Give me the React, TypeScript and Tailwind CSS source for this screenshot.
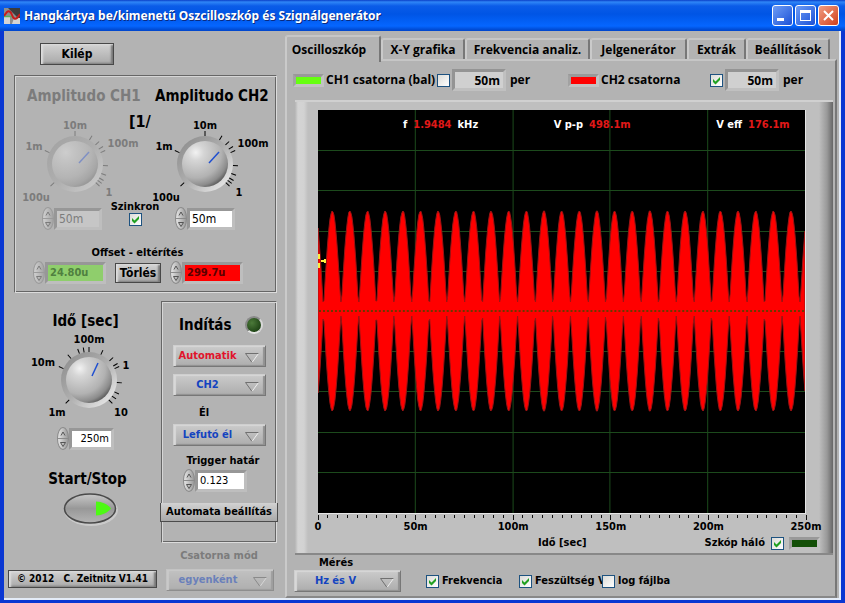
import React, { useState } from 'react';
import clsx from 'clsx';

const TABS = [
  { id: 'scope', label: 'Oscilloszkóp', width: 'w-[96px]' },
  { id: 'xy', label: 'X-Y grafika', width: 'w-[84px]' },
  { id: 'freq', label: 'Frekvencia analiz.', width: 'w-[125px]' },
  { id: 'gen', label: 'Jelgenerátor', width: 'w-[97px]' },
  { id: 'extra', label: 'Extrák', width: 'w-[59px]' },
  { id: 'settings', label: 'Beállítások', width: 'w-[84px]' },
];

interface DialLabel {
  text: string;
  x: number;
  y: number;
}

const AMP_TICKS = [-132, -66, 0, 31, 47, 58, 66, 93, 110, 120, 126, 132];
const AMP_LABELS: DialLabel[] = [
  { text: '10m', x: 0, y: -39 },
  { text: '1m', x: -41, y: -18 },
  { text: '100m', x: 48, y: -21 },
  { text: '100u', x: -39, y: 33 },
  { text: '1', x: 34, y: 28 },
];

const TIME_TICKS = [-135, -66, -40, -20, -10, 0, 25, 47, 60, 66, 95, 115, 125, 135];
const TIME_LABELS: DialLabel[] = [
  { text: '100m', x: 0, y: -41 },
  { text: '10m', x: -46, y: -18 },
  { text: '1', x: 37, y: -15 },
  { text: '1m', x: -32, y: 32 },
  { text: '10', x: 32, y: 32 },
];

interface DialProps {
  id: string;
  className: string;
  cx: number;
  cy: number;
  ticks: number[];
  labels: DialLabel[];
  pointer: [number, number, number, number];
  disabled?: boolean;
}

function Dial({ id, className, cx, cy, ticks, labels, pointer, disabled }: DialProps) {
  const ink = disabled ? '#7c7c7c' : '#000';
  return (
    <svg className={clsx('block shrink-0 overflow-visible', className)} role="img" aria-label={id}>
      <defs>
        <radialGradient id={`${id}-body`} cx="0.3" cy="0.25" r="0.85">
          <stop offset="0" stopColor={disabled ? '#cdcdcd' : '#f2f2f2'} />
          <stop offset="0.2" stopColor={disabled ? '#c4c4c4' : '#d6d6d6'} />
          <stop offset="0.65" stopColor={disabled ? '#b4b4b4' : '#b2b2b2'} />
          <stop offset="0.85" stopColor={disabled ? '#a6a6a6' : '#8c8c8c'} />
          <stop offset="1" stopColor={disabled ? '#929292' : '#4c4c4c'} />
        </radialGradient>
        <linearGradient id={`${id}-ring`} x1="0" y1="0" x2="1" y2="1">
          <stop offset="0.1" stopColor={disabled ? '#a4a4a4' : '#909090'} />
          <stop offset="0.5" stopColor="#aeaeae" />
          <stop offset="0.9" stopColor={disabled ? '#c9c9c9' : '#e8e8e8'} />
        </linearGradient>
      </defs>
      <g transform={`translate(${cx} ${cy})`}>
        <circle r="28" fill={`url(#${id}-ring)`} />
        <circle r="23" fill={`url(#${id}-body)`} />
        <line
          x1={pointer[0]}
          y1={pointer[1]}
          x2={pointer[2]}
          y2={pointer[3]}
          stroke={disabled ? '#7f90c4' : '#1f4fd0'}
          strokeWidth="1.5"
        />
        {ticks.map((a) => (
          <line key={a} y1="-28" y2="-33" stroke={ink} transform={`rotate(${a})`} />
        ))}
        {labels.map((l) => (
          <text key={l.text} x={l.x} y={l.y + 4} textAnchor="middle" fill={ink} className="text-[11px] font-bold">
            {l.text}
          </text>
        ))}
      </g>
    </svg>
  );
}

interface NumberFieldProps {
  label: string;
  value: string;
  className: string;
  inputClass: string;
  disabled?: boolean;
}

function NumberField({ label, value, className, inputClass, disabled }: NumberFieldProps) {
  return (
    <div className={clsx('flex h-[23px] items-center', className)}>
      <div
        className={clsx(
          'flex h-[23px] w-3 shrink-0 flex-col overflow-hidden rounded-[50%] border border-[#8a8a8a] bg-linear-to-r from-[#e6e6e6] to-[#9a9a9a]',
          disabled && 'opacity-60'
        )}
      >
        <button type="button" aria-label={`${label} +`} disabled={disabled} className="flex flex-1 items-center justify-center border-b border-[#8a8a8a]">
          <svg className="h-[5px] w-[6px]" viewBox="0 0 6 5">
            <path d="M1 4.5 3 1l2 3.5" fill="none" stroke="#555" />
          </svg>
        </button>
        <button type="button" aria-label={`${label} -`} disabled={disabled} className="flex flex-1 items-center justify-center">
          <svg className="h-[5px] w-[6px]" viewBox="0 0 6 5">
            <path d="M.5 .5h5L3 4.5z" fill="none" stroke="#555" />
          </svg>
        </button>
      </div>
      <input
        aria-label={label}
        defaultValue={value}
        disabled={disabled}
        className={clsx(
          'h-[22px] min-w-0 flex-1 border-3 border-t-[#979797] border-r-[#bebebe] border-b-[#bebebe] border-l-[#979797] px-[2px] outline-none',
          inputClass
        )}
      />
    </div>
  );
}

interface RingSelectProps {
  label: string;
  value: string;
  className: string;
  textClass: string;
  disabled?: boolean;
}

function RingSelect({ label, value, className, textClass, disabled }: RingSelectProps) {
  return (
    <div className={clsx('relative h-[22px]', className, disabled && 'opacity-60')}>
      <select
        aria-label={label}
        disabled={disabled}
        className={clsx(
          'h-full w-full appearance-none border border-t-[#cfcfcf] border-r-[#777] border-b-[#777] border-l-[#cfcfcf] bg-linear-to-b from-[#cbcbcb] to-[#adadad] pr-6 text-center text-[11px] leading-[14px] font-bold opacity-100 shadow-[inset_2px_1px_1px_#d8d8d8,inset_-2px_-1px_1px_#919191]',
          textClass
        )}
      >
        <option>{value}</option>
      </select>
      <svg className="pointer-events-none absolute top-[8px] right-[7px] h-[10px] w-[14px]" viewBox="0 0 14 10">
        <path d="M13.500 .5 7 9.500" stroke="#eee" fill="none" />
        <path d="M13.500 .5H.5L7 9.500" stroke="#707070" fill="none" />
      </svg>
    </div>
  );
}

interface CheckProps {
  id: string;
  checked?: boolean;
}

function Check({ id, checked }: CheckProps) {
  return (
    <span className="relative block h-[13px] w-[13px] shrink-0">
      <input
        id={id}
        type="checkbox"
        defaultChecked={checked}
        className="peer block h-[13px] w-[13px] appearance-none border border-[#1d5280] bg-linear-to-br from-[#dcdcd8] to-white"
      />
      <svg className="pointer-events-none absolute inset-0 hidden h-[13px] w-[13px] peer-checked:block" viewBox="0 0 13 13">
        <path d="M3 5v3l2.500 2.500L10 6V3L5.500 7.500z" fill="#21a121" />
      </svg>
    </span>
  );
}

function Swatch({ className }: { className: string }) {
  return (
    <span className="block shrink-0 border-[3px] border-t-[#999] border-r-[#c2c2c2] border-b-[#c2c2c2] border-l-[#a2a2a2]">
      <span className={clsx('block h-[7px] w-[25px]', className)} />
    </span>
  );
}

function PerField({ id }: { id: string }) {
  return (
    <div className="flex items-center gap-1">
      <input
        id={id}
        defaultValue="50m"
        className="h-[22px] w-[54px] border-3 border-t-[#949494] border-r-[#c0c0c0] border-b-[#c0c0c0] border-l-[#949494] bg-[#d0d0d0] pr-[3px] text-right text-xs font-bold"
      />
      <label htmlFor={id}>per</label>
    </div>
  );
}

const BEVEL =
  'border border-t-[#666] border-r-[#dcdcdc] border-b-[#dcdcdc] border-l-[#666] shadow-[inset_1px_1px_0_#d6d6d6,inset_-1px_-1px_0_#666]';

const BUTTON =
  'border border-[#484848] bg-linear-to-b from-[#d2d2d2] to-[#a9a9a9] font-bold whitespace-nowrap shadow-[inset_2px_1px_2px_#dedede,inset_-2px_-1px_2px_#777]';

function wavePath() {
  const top: string[] = [];
  const bottom: string[] = [];
  for (let x = 0; x <= 488; x++) {
    const e = Math.abs(Math.cos(((x - 14.300) / 17.680) * Math.PI));
    top.push(`${x} ${Math.round(200 - Math.max(e, 0.08) * 99)}`);
    bottom.unshift(`${x} ${Math.round(201 + Math.max(e, 0.05) * 100)}`);
  }
  return `M${top.join('L')}L${bottom.join('L')}Z`;
}

function Reading({ name, value, unit }: { name: string; value: string; unit?: string }) {
  return (
    <div className="flex gap-[6px]">
      <span>{name}</span>
      <span className="text-[#e01818]">{value}</span>
      {unit && <span>{unit}</span>}
    </div>
  );
}

function Plot() {
  return (
    <div className="relative flex-1 bg-black">
      <svg className="absolute inset-0 h-full w-full" viewBox="0 0 488 403" preserveAspectRatio="none">
        <g stroke="#1c4a1c">
          {[97.500, 195.500, 292.500, 390.500].map((x) => (
            <line key={x} x1={x} x2={x} y1="0" y2="403" />
          ))}
          {[40.500, 80.500, 121.500, 161.500, 241.500, 281.500, 322.500, 362.500].map((y) => (
            <line key={y} x1="0" x2="488" y1={y} y2={y} />
          ))}
        </g>
        <path d={wavePath()} fill="#f00" stroke="#9c1414" strokeWidth="1" />
        <line x1="1" x2="488" y1="201" y2="201" stroke="#6a3a00" strokeWidth="2" strokeDasharray="2 2" />
        <path d="M0 144h2v5H0zM0 153h2v5H0zM3 150h3v-1h2v4H6v-1H3z" fill="#ffee40" />
      </svg>
      <div className="relative grid grid-cols-[151fr_163fr_89fr] pt-2 pl-[85px] text-[11px] leading-[14px] font-bold whitespace-nowrap text-white">
        <Reading name="f" value="1.9484" unit="kHz" />
        <Reading name="V p-p" value="498.1m" />
        <Reading name="V eff" value="176.1m" />
      </div>
    </div>
  );
}

function TimeAxis() {
  const ticks = Array.from({ length: 51 }, (_, i) => i);
  return (
    <div>
      <svg className="mt-px block h-[5px] w-full overflow-visible">
        {ticks.map((i) => (
          <line key={i} x1={`${i * 2}%`} x2={`${i * 2}%`} y1="0" y2={i % 10 === 0 ? 5 : 3} stroke="#111" shapeRendering="crispEdges" />
        ))}
      </svg>
      <div className="flex justify-between text-[11px] leading-[14px] font-bold">
        {['0', '50m', '100m', '150m', '200m', '250m'].map((t) => (
          <span key={t} className="flex w-0 justify-center">
            {t}
          </span>
        ))}
      </div>
    </div>
  );
}

function TitleBar() {
  const box = 'flex h-[21px] w-[21px] items-center justify-center rounded-[3px] border border-white';
  return (
    <header className="flex h-[31px] items-center bg-[linear-gradient(#0a3fc8_0,#2f86f7_2px,#0b5ce8_6px,#0055e5_14px,#0566ff_26px,#0048cf_30px)] pr-[6px] pl-1 text-white">
      <svg className="h-4 w-4" viewBox="0 0 16 16">
        <path d="M0 0h16v16H0z" fill="#8d8d8d" />
        <path d="M4 0h12v12z" fill="#3c3c3c" />
        <path d="M0 9h6v7H0zM10 10h6v6h-8z" fill="#d4d4d4" />
        <path d="M0 8.500h9" stroke="#58b058" strokeWidth="1.5" />
        <path d="M0 8l3-4c2-2 4 0 5 3s3 5 5 3l3-4" fill="none" stroke="#c81c1c" strokeWidth="2" />
      </svg>
      <h1 className="ml-1 flex-1 font-['Noto_Sans','Open_Sans',sans-serif] text-[12px] font-bold whitespace-nowrap [text-shadow:1px_1px_0_#0a2a80]">
        Hangkártya be/kimenetű Oszcilloszkóp és Szignálgenerátor
      </h1>
      <div className="flex gap-[2px]">
        <button type="button" aria-label="Minimize" className={clsx(box, 'bg-linear-to-br from-[#6f9cf5] to-[#1b4fd6]')}>
          <svg className="h-[13px] w-[13px]">
            <path d="M1 9h7v3H1z" fill="#fff" />
          </svg>
        </button>
        <button type="button" aria-label="Maximize" className={clsx(box, 'bg-linear-to-br from-[#6f9cf5] to-[#1b4fd6]')}>
          <svg className="h-[13px] w-[13px]">
            <path d="M1 1h11v11H1zM2 4v7h9V4z" fill="#fff" fillRule="evenodd" />
          </svg>
        </button>
        <button type="button" aria-label="Close" className={clsx(box, 'bg-linear-to-br from-[#f09c80] to-[#d03c14]')}>
          <svg className="h-[13px] w-[13px]">
            <path d="M2 2l9 9M11 2l-9 9" stroke="#fff" strokeWidth="2" />
          </svg>
        </button>
      </div>
    </header>
  );
}

function AmplitudePanel() {
  return (
    <section className={clsx('mt-[10px] ml-[10px] w-[263px] px-px pt-[10px] pb-[8px]', BEVEL)}>
      <div className="flex gap-[18px] pl-[11px] text-[15px] leading-5 font-bold whitespace-nowrap">
        <h2 className="w-[110px] text-[#7c7c7c]">Amplitudo CH1</h2>
        <h2 className="w-[110px]">Amplitudo CH2</h2>
      </div>
      <div className="relative mt-[6px] flex gap-2 pl-1">
        <Dial id="amp1" className="h-[88px] w-[122px]" cx={55} cy={52} ticks={AMP_TICKS} labels={AMP_LABELS} pointer={[4, -1, 14, -12]} disabled />
        <Dial id="amp2" className="h-[88px] w-[122px]" cx={55} cy={52} ticks={AMP_TICKS} labels={AMP_LABELS} pointer={[4, -1, 14, -12]} />
        <span className="absolute top-0 left-[113px] text-base leading-5 font-bold">[1/</span>
      </div>
      <div className="flex h-[30px] items-end pl-[26px]">
        <NumberField label="Amplitudo CH1" value="50m" className="w-[60px]" inputClass="bg-[#c6c6c6] text-xs text-[#7c7c7c]" disabled />
        <div className="ml-2 flex w-[50px] flex-col items-center self-start text-[11px] leading-[13px] font-bold">
          <label htmlFor="sync">Szinkron</label>
          <Check id="sync" checked />
        </div>
        <NumberField label="Amplitudo CH2" value="50m" className="ml-[15px] w-[60px]" inputClass="bg-white text-xs" />
      </div>
      <div className="mt-[15px] pr-4 text-center text-[11px] leading-4 font-bold">Offset - eltérítés</div>
      <div className="flex items-center pl-[17px]">
        <NumberField label="Offset CH1" value="24.80u" className="w-[73px]" inputClass="bg-[#8fce6c] text-[11px] font-bold text-[#4f8040]" disabled />
        <button type="button" className={clsx('mx-[9px] h-5 w-[46px] text-xs leading-4', BUTTON)}>
          Törlés
        </button>
        <NumberField label="Offset CH2" value="299.7u" className="w-[73px]" inputClass="bg-[#f00] text-[11px] font-bold text-[#5a0000]" />
      </div>
    </section>
  );
}

function TimePanel() {
  return (
    <section className="flex w-[157px] flex-col justify-between pt-[18px] pb-[10px]">
      <div className="flex flex-col items-center pl-[6px]">
        <h2 className="text-[15px] leading-5 font-bold">Idő [sec]</h2>
        <Dial id="time" className="h-[90px] w-[120px]" cx={63} cy={49} ticks={TIME_TICKS} labels={TIME_LABELS} pointer={[3, -4, 9, -17]} />
        <NumberField label="Idő" value="250m" className="mt-[6px] w-[57px]" inputClass="bg-white text-right text-[11px]" />
        <h2 className="mt-[19px] pl-1 text-[15px] leading-5 font-bold">Start/Stop</h2>
        <button type="button" aria-label="Start/Stop" className="mt-1 ml-2">
          <svg className="h-8 w-[54px] overflow-visible" viewBox="0 0 54 32">
            <defs>
              <linearGradient id="oval" x1="0" y1="0" x2="0" y2="1">
                <stop offset="0" stopColor="#c8c8c8" />
                <stop offset="0.5" stopColor="#989898" />
                <stop offset="1" stopColor="#b4b4b4" />
              </linearGradient>
            </defs>
            <ellipse cx="28" cy="17" rx="27" ry="16" fill="#cacaca" />
            <ellipse cx="27" cy="15.500" rx="25.500" ry="14.500" fill="url(#oval)" stroke="#4a4a4a" strokeWidth="1.500" />
            <path d="M33 8.500c6 0 12 3 15 7-3 4-9 7-15 7z" fill="#4dfa14" />
          </svg>
        </button>
      </div>
      <button type="button" className={clsx('mx-1 h-[18px] text-[10px] leading-3 whitespace-pre', BUTTON)}>
        {'© 2012   C. Zeitnitz V1.41'}
      </button>
    </section>
  );
}

function TriggerPanel() {
  return (
    <section className="mt-2 w-[116px]">
      <div className={clsx('flex flex-col px-px pt-[13px] pb-5', BEVEL)}>
        <div className="flex items-center gap-[13px] pl-4">
          <h2 className="text-[15px] leading-5 font-bold">Indítás</h2>
          <span className="h-[18px] w-[18px] rounded-full border-2 border-t-[#8a8a8a] border-r-[#d8d8d8] border-b-[#e4e4e4] border-l-[#8a8a8a] bg-radial-[at_35%_35%] from-[#4c7a3a] to-[#0e3008]" />
        </div>
        <RingSelect label="Indítás" value="Automatik" className="mt-[10px] ml-[10px] w-[93px]" textClass="text-[#e0142c]" />
        <RingSelect label="Csatorna" value="CH2" className="mt-[7px] ml-[10px] w-[93px]" textClass="text-[#1444c0]" />
        <div className="mt-[9px] pr-[30px] text-center text-[11px] leading-4 font-bold">Él</div>
        <RingSelect label="Él" value="Lefutó él" className="mt-[3px] ml-[10px] w-[93px]" textClass="text-[#1444c0]" />
        <div className="mt-[7px] pl-2 text-center text-[11px] leading-4 font-bold">Trigger határ</div>
        <NumberField label="Trigger határ" value="0.123" className="ml-5 w-[64px]" inputClass="bg-white text-[11px]" />
        <button
          type="button"
          className="-mx-[3px] mt-[11px] flex h-[19px] items-center justify-center border-x border-b border-[#4c4c4c] bg-linear-to-b from-[#d2d2d2] to-[#a9a9a9] text-[11px] font-bold whitespace-nowrap"
        >
          Automata beállítás
        </button>
      </div>
      <div className="mt-[5px] text-center text-[11px] leading-4 font-bold text-[#7c7c7c]">Csatorna mód</div>
      <RingSelect label="Csatorna mód" value="egyenként" className="mt-[5px] ml-[5px] w-[108px]" textClass="text-[#3a5fc0]" disabled />
    </section>
  );
}

function ScopePanel() {
  return (
    <div className="mt-[9px] ml-2 mr-[2px] flex flex-1 flex-col border-t-2 border-b-2 border-t-[#d0d0d0] border-b-[#888] bg-[linear-gradient(90deg,#b4b4b4_0,#d4d4d4_3px,#d2d2d2_9px,#bfbfbf_13px,#bfbfbf_calc(100%-14px),#999_calc(100%-6px),#666_100%)] pt-2 pr-[27px] pl-[23px]">
      <div className="flex flex-1 border-r border-b border-[#e6e6e6]">
        <Plot />
      </div>
      <TimeAxis />
      <div className="-mr-[14px] flex h-[19px] items-center justify-end text-[11px] font-bold">
        <span className="mr-auto pl-[220px]">Idő [sec]</span>
        <label htmlFor="grid">Szkóp háló</label>
        <span className="mr-[5px] ml-[6px]">
          <Check id="grid" checked />
        </span>
        <Swatch className="bg-[#145008]" />
      </div>
    </div>
  );
}

export default function App() {
  const [tab, setTab] = useState('scope');

  return (
    <div className="flex min-h-screen flex-col bg-[#0a37d2] font-['DejaVu_Sans_Condensed','DejaVu_Sans',sans-serif] text-xs text-black">
      <TitleBar />
      <div className="mx-1 mb-[3px] flex flex-1 border-r-2 border-b-2 border-[#e4ecf8] bg-[#b3b3b3]">
        <div className="flex w-[281px] shrink-0 flex-col">
          <button type="button" className={clsx('mt-3 ml-9 h-[22px] w-[74px] text-xs leading-4', BUTTON)}>
            Kilép
          </button>
          <AmplitudePanel />
          <div className="flex flex-1">
            <TimePanel />
            <TriggerPanel />
          </div>
        </div>

        <main className="mr-[2px] flex min-w-0 flex-1 flex-col pt-1">
          <nav role="tablist" className="flex h-6 items-end font-['Open_Sans','Noto_Sans',sans-serif]">
            {TABS.map((t) => (
              <button
                key={t.id}
                type="button"
                role="tab"
                aria-selected={tab === t.id}
                onClick={() => setTab(t.id)}
                className={clsx(
                  'relative rounded-t-[3px] border-t-2 border-r-2 border-l-2 border-t-[#c6c6c6] border-r-[#777] border-l-[#cacaca] bg-[#b3b3b3] text-xs leading-4 font-bold whitespace-nowrap',
                  t.width,
                  tab === t.id ? 'z-10 -mb-[3px] h-[27px] pr-2' : 'h-[21px]'
                )}
              >
                {t.label}
              </button>
            ))}
          </nav>
          <div className="flex flex-1 flex-col border-2 border-t-[#c6c6c6] border-r-[#777] border-b-[#888] border-l-[#cacaca] pt-2">
            <div className="flex h-[22px] items-center pl-[6px] font-['Open_Sans','Noto_Sans',sans-serif] font-bold whitespace-nowrap">
              <div className="flex w-[275px] items-center gap-[2px]">
                <Swatch className="bg-[#66ff10]" />
                <label htmlFor="ch1" className="w-[109px]">
                  CH1 csatorna (bal)
                </label>
                <Check id="ch1" />
                <PerField id="ch1-per" />
              </div>
              <div className="flex items-center gap-[2px]">
                <Swatch className="bg-[#f00]" />
                <label htmlFor="ch2" className="w-[107px]">
                  CH2 csatorna
                </label>
                <Check id="ch2" checked />
                <PerField id="ch2-per" />
              </div>
            </div>
            <ScopePanel />
            <div className="flex h-[41px] items-end pb-[4px] text-[11px] font-bold">
              <div className="ml-[7px]">
                <div className="pl-[25px] leading-[15px]">Mérés</div>
                <RingSelect label="Mérés" value="Hz és V" className="w-[107px]" textClass="text-[#1444c0]" />
              </div>
              <div className="ml-[25px] flex h-[22px] items-center whitespace-nowrap">
                <div className="flex w-[93px] items-center gap-[3px]">
                  <Check id="freq" checked />
                  <label htmlFor="freq">Frekvencia</label>
                </div>
                <div className="flex w-[83px] items-center gap-[3px]">
                  <Check id="volt" checked />
                  <label htmlFor="volt">Feszültség V</label>
                </div>
                <div className="flex items-center gap-[3px]">
                  <Check id="log" />
                  <label htmlFor="log">log fájlba</label>
                </div>
              </div>
            </div>
          </div>
        </main>
      </div>
    </div>
  );
}
